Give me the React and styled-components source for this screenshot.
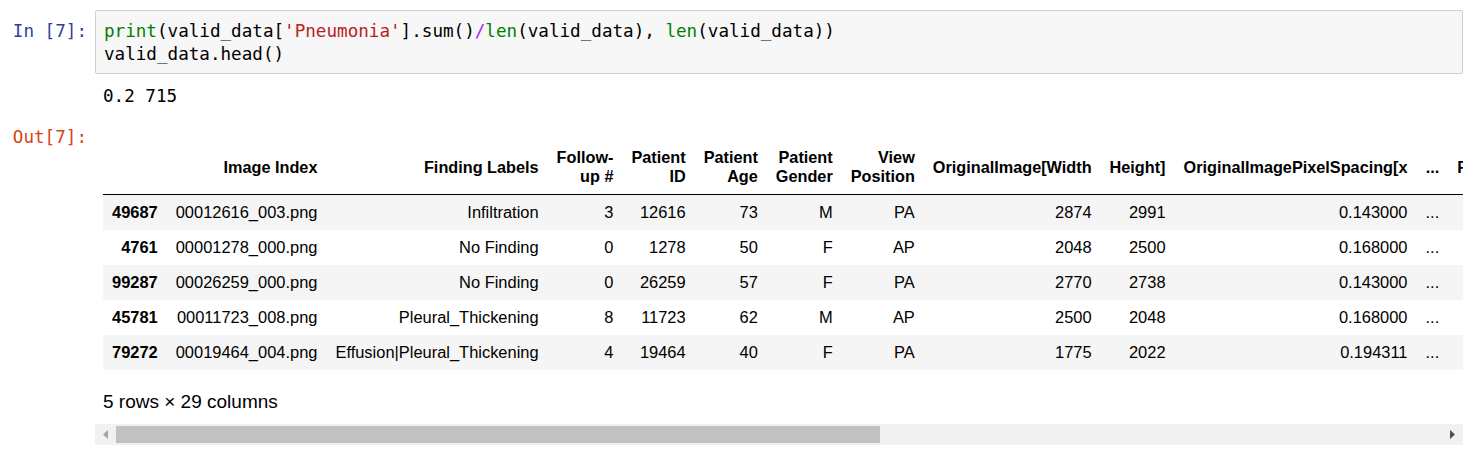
import styled, { createGlobalStyle } from 'styled-components'

const GlobalStyle = createGlobalStyle`
  html, body {
    margin: 0;
    padding: 0;
    background: #fff;
  }
  body {
    font-family: "Liberation Sans", Arial, sans-serif;
    color: #000;
  }
`

const MONO = `"DejaVu Sans Mono", "Liberation Mono", monospace`

const Page = styled.div`
  width: 1482px;
  box-sizing: border-box;
  padding: 10px 19px 0 0;
`

const CellRow = styled.div`
  display: flex;
  align-items: flex-start;
  margin-top: ${(p) => p.gap || 0}px;
`

const Prompt = styled.div`
  flex: none;
  width: 95px;
  box-sizing: border-box;
  padding-right: 8px;
  padding-top: ${(p) => p.offset || 0}px;
  text-align: right;
  font-family: ${MONO};
  font-size: 17.6px;
  line-height: 23px;
  color: ${(p) => (p.out ? '#d84315' : '#303f9f')};
  white-space: pre;
`

const InputBox = styled.div`
  flex: 1;
  min-width: 0;
  border: 1px solid #cfcfcf;
  border-radius: 2px;
  background: #f7f7f7;
  padding: 9px 8px 7px;
  font-family: ${MONO};
  font-size: 17.6px;
  line-height: 23px;
`

const CodeLine = styled.div`
  white-space: pre;
  color: #000;
`

const tokenColors = {
  builtin: '#008000',
  string: '#ba2121',
  operator: '#aa22ff',
}

const Token = styled.span`
  color: ${(p) => tokenColors[p.kind] || '#000'};
`

const StreamText = styled.div`
  flex: 1;
  padding-left: 8px;
  font-family: ${MONO};
  font-size: 17.6px;
  line-height: 23px;
  white-space: pre;
`

const Subarea = styled.div`
  flex: 1;
  min-width: 0;
  display: flex;
  flex-direction: column;
`

const Viewport = styled.div`
  overflow: hidden;
  padding: 14px 0 0 8px;
`

const Frame = styled.table`
  border-collapse: collapse;
  border-spacing: 0;
  font-family: "Liberation Sans", Arial, sans-serif;
  font-size: 16.45px;
  line-height: 19px;
  color: #000;
`

const HeadRow = styled.tr`
  border-bottom: 1px solid #000;
`

const HeadCell = styled.th`
  padding: 8px 9px;
  text-align: right;
  vertical-align: middle;
  font-size: 16.25px;
  font-weight: bold;
  white-space: normal;
`

const BodyRow = styled.tr`
  background: ${(p) => (p.striped ? '#f5f5f5' : '#fff')};
`

const IndexCell = styled.th`
  padding: 8px 9px;
  text-align: right;
  vertical-align: middle;
  font-weight: bold;
  white-space: nowrap;
`

const Cell = styled.td`
  padding: 8px 9px;
  text-align: right;
  vertical-align: middle;
  white-space: nowrap;
`

const Caption = styled.div`
  margin: 21px 0 11px;
  font-family: "Liberation Sans", Arial, sans-serif;
  font-size: 19px;
  line-height: 22px;
`

const ScrollTrack = styled.div`
  display: flex;
  align-items: center;
  height: 21px;
  background: #f1f1f1;
`

const ScrollButton = styled.div`
  flex: none;
  width: 21px;
  height: 21px;
  display: flex;
  align-items: center;
  justify-content: center;
`

const ScrollThumb = styled.div`
  flex: none;
  width: 764px;
  height: 17px;
  background: #c1c1c1;
`

const ScrollSpace = styled.div`
  flex: 1;
`

const Arrow = ({ dir, color }) => (
  <svg width="5" height="9" viewBox="0 0 5 9">
    <polygon points={dir === 'left' ? '5,0 5,9 0,4.5' : '0,0 0,9 5,4.5'} fill={color} />
  </svg>
)

const columns = [
  'Image Index',
  'Finding Labels',
  'Follow-up #',
  'Patient ID',
  'Patient Age',
  'Patient Gender',
  'View Position',
  'OriginalImage[Width',
  'Height]',
  'OriginalImagePixelSpacing[x',
  '...',
  'Fibrosis',
  'Hernia',
  'Infiltration',
  'Mass',
  'No Finding',
  'Nodule',
  'Pleural_Thickening',
  'Pneumonia',
  'Pneumothorax',
  'pneumonia_class',
]

const rows = [
  ['49687', '00012616_003.png', 'Infiltration', '3', '12616', '73', 'M', 'PA', '2874', '2991', '0.143000', '...', '0', '0', '1', '0', '0', '0', '0', '0', '0', '0'],
  ['4761', '00001278_000.png', 'No Finding', '0', '1278', '50', 'F', 'AP', '2048', '2500', '0.168000', '...', '0', '0', '0', '0', '1', '0', '0', '0', '0', '0'],
  ['99287', '00026259_000.png', 'No Finding', '0', '26259', '57', 'F', 'PA', '2770', '2738', '0.143000', '...', '0', '0', '0', '0', '1', '0', '0', '0', '0', '0'],
  ['45781', '00011723_008.png', 'Pleural_Thickening', '8', '11723', '62', 'M', 'AP', '2500', '2048', '0.168000', '...', '0', '0', '0', '0', '0', '0', '1', '0', '0', '0'],
  ['79272', '00019464_004.png', 'Effusion|Pleural_Thickening', '4', '19464', '40', 'F', 'PA', '1775', '2022', '0.194311', '...', '0', '0', '0', '0', '0', '0', '1', '0', '0', '0'],
]

export default function App() {
  return (
    <>
      <GlobalStyle />
      <Page>
        <CellRow>
          <Prompt offset={10}>In [7]:</Prompt>
          <InputBox>
            <CodeLine>
              <Token kind="builtin">print</Token>
              <Token>(valid_data[</Token>
              <Token kind="string">'Pneumonia'</Token>
              <Token>].sum()</Token>
              <Token kind="operator">/</Token>
              <Token kind="builtin">len</Token>
              <Token>(valid_data), </Token>
              <Token kind="builtin">len</Token>
              <Token>(valid_data))</Token>
            </CodeLine>
            <CodeLine>valid_data.head()</CodeLine>
          </InputBox>
        </CellRow>

        <CellRow gap={11}>
          <Prompt />
          <StreamText>0.2 715</StreamText>
        </CellRow>

        <CellRow gap={18}>
          <Prompt out>Out[7]:</Prompt>
          <Subarea>
            <Viewport>
              <Frame>
                <thead>
                  <HeadRow>
                    <HeadCell />
                    {columns.map((c) => (
                      <HeadCell key={c}>{c}</HeadCell>
                    ))}
                  </HeadRow>
                </thead>
                <tbody>
                  {rows.map((r, i) => (
                    <BodyRow key={r[0]} striped={i % 2 === 0}>
                      <IndexCell>{r[0]}</IndexCell>
                      {r.slice(1).map((v, j) => (
                        <Cell key={j}>{v}</Cell>
                      ))}
                    </BodyRow>
                  ))}
                </tbody>
              </Frame>
              <Caption>5 rows × 29 columns</Caption>
            </Viewport>
            <ScrollTrack>
              <ScrollButton>
                <Arrow dir="left" color="#a3a3a3" />
              </ScrollButton>
              <ScrollThumb />
              <ScrollSpace />
              <ScrollButton>
                <Arrow dir="right" color="#505050" />
              </ScrollButton>
            </ScrollTrack>
          </Subarea>
        </CellRow>
      </Page>
    </>
  )
}
